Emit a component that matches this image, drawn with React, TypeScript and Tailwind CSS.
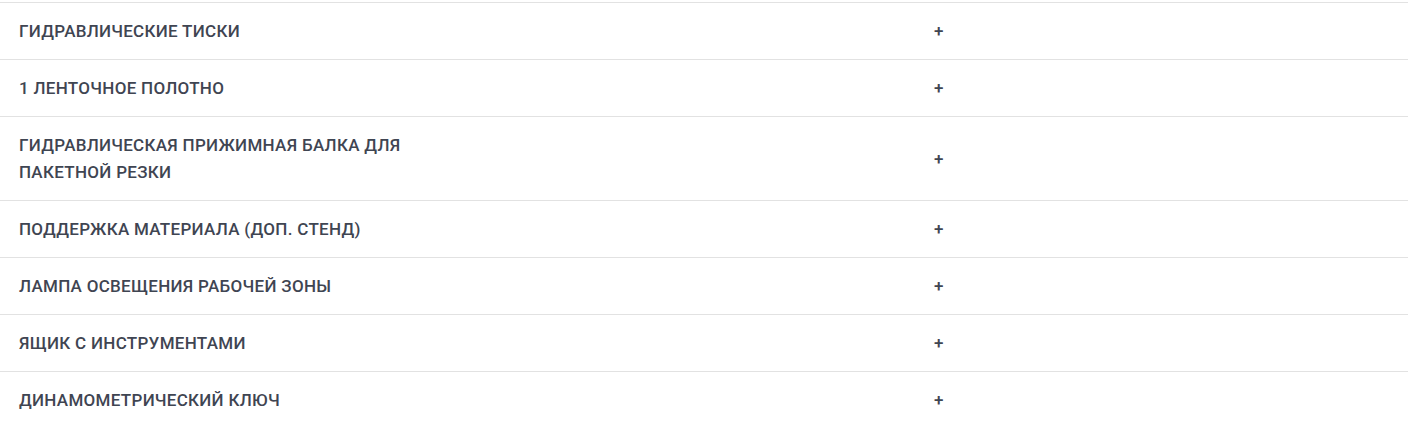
const items = [
  "Гидравлические тиски",
  "1 ленточное полотно",
  "Гидравлическая прижимная балка для пакетной резки",
  "Поддержка материала (доп. стенд)",
  "Лампа освещения рабочей зоны",
  "Ящик с инструментами",
  "Динамометрический ключ",
];

export default function App() {
  return (
    <div className="min-h-screen w-full bg-white pt-[2px] font-['Roboto',sans-serif] text-[#3f4552]">
      <div className="w-[1408px] border-t border-[#e2e2e2]">
        {items.map((item) => (
          <div
            key={item}
            className="grid grid-cols-[915px_1fr] items-center border-b border-[#e2e2e2] last:border-b-0 pt-[15px] pb-[14px]"
          >
            <div className="pl-[19px]">
              <div className="max-w-[440px] text-[17px] leading-[27px] tracking-[0.3px] font-medium uppercase">
                {item}
              </div>
            </div>
            <div className="pl-[19px] text-[17px] leading-[27px] font-medium">+</div>
          </div>
        ))}
      </div>
    </div>
  );
}
